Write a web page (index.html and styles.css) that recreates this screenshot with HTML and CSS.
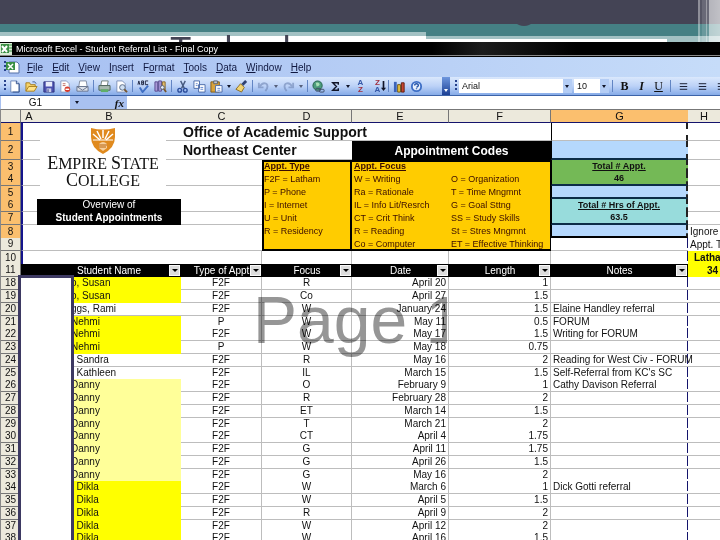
FILE: index.html
```html
<!DOCTYPE html>
<html lang="en">
<head>
  <meta charset="utf-8">
  <title>Student Referral List</title>
  <link rel="stylesheet" href="styles.css">
</head>
<body>
  <header class="slide-head">
    <div class="band"></div>
    <span class="descender"></span>
    <h1>Technology</h1>
    <div class="stripes"></div>
  </header>

  <main class="excel">
    <div class="titlebar">
      <svg width="13" height="12" viewBox="0 0 13 12"><rect x="0" y="0" width="12" height="12" fill="#d9ecd4"/><rect x="1" y="1" width="8" height="9" fill="#3b8f44"/><path d="M2 3l5 6M7 3L2 9" stroke="#fff" stroke-width="2"/><path d="M9 2h3M9 5h3M9 8h3" stroke="#3b8f44"/></svg>
      <span>Microsoft Excel - Student Referral List - Final Copy</span>
    </div>

    <nav class="menubar">
      <i class="grip"></i>
      <svg width="14" height="13" viewBox="0 0 14 13"><path d="M3 1h8l2 2v9H3z" fill="#fff" stroke="#5471a8"/><rect x="0" y="1" width="9" height="8" fill="#3b8f44"/><path d="M2 3l5 5M7 3L2 8" stroke="#fff" stroke-width="1.5"/></svg>
      <button><u>F</u>ile</button>
      <button><u>E</u>dit</button>
      <button><u>V</u>iew</button>
      <button><u>I</u>nsert</button>
      <button>F<u>o</u>rmat</button>
      <button><u>T</u>ools</button>
      <button><u>D</u>ata</button>
      <button><u>W</u>indow</button>
      <button><u>H</u>elp</button>
    </nav>

    <div class="toolbars">
      <div class="toolbar standard">
        <i class="grip"></i>
        <button class="tool" aria-label="New"><svg viewBox="0 0 14 14"><path d="M3 1h6l3 3v9H3z" fill="#fff" stroke="#6b86b8"/><path d="M9 1v3h3M12 4v9H5" fill="none" stroke="#2e4f8c"/></svg></button>
        <button class="tool" aria-label="Open"><svg viewBox="0 0 14 14"><path d="M1 12V3h4l1 2h5v2" fill="#f6d36b" stroke="#a77d1c"/><path d="M1 12l3-5h9l-3 5z" fill="#ffe28a" stroke="#a77d1c"/><path d="M8 2q3-1 4 2" fill="none" stroke="#3d5b94"/></svg></button>
        <button class="tool" aria-label="Save"><svg viewBox="0 0 14 14"><path d="M2 2h11v11H2z" fill="#4a50b0" stroke="#30347e"/><path d="M4 2h7v5H4z" fill="#e7ebfa"/><path d="M5 9h5v4H5z" fill="#c9cde8"/><path d="M6 10h1v3H6z" fill="#30347e"/></svg></button>
        <button class="tool" aria-label="Permission"><svg viewBox="0 0 14 14"><path d="M2 1h6l3 3v9H2z" fill="#fff" stroke="#8a9cc0"/><circle cx="9" cy="10" r="3" fill="#d63b2c"/><path d="M7 10h4" stroke="#fff" stroke-width="1.5"/><path d="M4 4h3M4 6h3" stroke="#c06a60"/></svg></button>
        <button class="tool" aria-label="E-mail"><svg viewBox="0 0 14 14"><path d="M4 1h7l1 6H3z" fill="#fff" stroke="#7f8aa0"/><path d="M1 7h12v5H1z" fill="#dbe0ea" stroke="#68748c"/><path d="M1 7l6 4 6-4" fill="none" stroke="#68748c"/></svg></button>
        <i class="sep"></i>
        <button class="tool" aria-label="Print"><svg viewBox="0 0 14 14"><path d="M4 1h7l-1 5H3z" fill="#fff" stroke="#6e7e78"/><path d="M1 6h12v5H1z" fill="#a8b9b0" stroke="#4d6359"/><path d="M3 10h8v3H3z" fill="#5fae68"/></svg></button>
        <button class="tool" aria-label="Print Preview"><svg viewBox="0 0 14 14"><path d="M2 1h6l3 3v9H2z" fill="#fff" stroke="#7c90b8"/><circle cx="8" cy="8" r="3" fill="#cfe0f3" stroke="#596a85"/><path d="M10 10l3 3" stroke="#76552e" stroke-width="2"/></svg></button>
        <i class="sep"></i>
        <button class="tool" aria-label="Spelling"><svg viewBox="0 0 14 14"><path d="M1 5l1-4 1 4M2 4h1M5 1v4h2V1zM5 3h2M12 1H9v4h3" fill="none" stroke="#1c2440"/><path d="M3 8l3 5 6-7" fill="none" stroke="#3f6fc4" stroke-width="2"/></svg></button>
        <button class="tool" aria-label="Research"><svg viewBox="0 0 14 14"><path d="M1 2h3v10H1zM5 1h3v11H5z" fill="#a898d8" stroke="#584a8c"/><path d="M9 2h3v8H9z" fill="#e6bf6c" stroke="#84652a"/><circle cx="9" cy="8" r="2" fill="#e8eef8" stroke="#4d5c78"/><path d="M11 10l2 3" stroke="#76552e" stroke-width="2"/></svg></button>
        <i class="sep"></i>
        <button class="tool" aria-label="Cut"><svg viewBox="0 0 14 14"><path d="M5 1l4 8M10 1L6 9" stroke="#46597e" stroke-width="1.5"/><circle cx="4" cy="11" r="2" fill="none" stroke="#2d4e9c" stroke-width="1.5"/><circle cx="10" cy="11" r="2" fill="none" stroke="#2d4e9c" stroke-width="1.5"/></svg></button>
        <button class="tool" aria-label="Copy"><svg viewBox="0 0 14 14"><path d="M1 1h6v8H1zM6 5h7v8H6z" fill="#fff" stroke="#4a69a6"/><path d="M3 4h2M3 6h2M8 8h3M8 10h3" stroke="#5d85cf"/></svg></button>
        <button class="tool" aria-label="Paste"><svg viewBox="0 0 14 14"><path d="M1 2h9v11H1z" fill="#d9a33c" stroke="#7f5a14"/><path d="M4 1h4v3H4z" fill="#bfc6d2" stroke="#5a606c"/><path d="M6 6h7v7H6z" fill="#fff" stroke="#4a69a6"/><path d="M8 9h3M8 11h3" stroke="#5d85cf"/></svg></button>
        <i class="drop"></i>
        <button class="tool" aria-label="Format Painter"><svg viewBox="0 0 14 14"><path d="M12 1L8 5" stroke="#2f4170" stroke-width="3"/><path d="M6 4l4 4-3 5-6-3z" fill="#f2d472" stroke="#8a6b20"/></svg></button>
        <i class="sep"></i>
        <button class="tool dim" aria-label="Undo"><svg viewBox="0 0 14 14"><path d="M2 3v5h5" fill="none" stroke="#6f86b4" stroke-width="2"/><path d="M3 7q3-5 7-3 3 3-1 8" fill="none" stroke="#6f86b4" stroke-width="2"/></svg></button>
        <i class="drop dim"></i>
        <button class="tool dim" aria-label="Redo"><svg viewBox="0 0 14 14"><path d="M12 3v5H7" fill="none" stroke="#6f86b4" stroke-width="2"/><path d="M11 7Q8 2 4 4q-3 3 1 8" fill="none" stroke="#6f86b4" stroke-width="2"/></svg></button>
        <i class="drop dim"></i>
        <i class="sep"></i>
        <button class="tool" aria-label="Hyperlink"><svg viewBox="0 0 14 14"><circle cx="6" cy="6" r="5" fill="#4b9c7c" stroke="#246049"/><path d="M4 3q3-1 4 1t-3 3z" fill="#a8dfb4"/><rect x="4" y="9" width="5" height="3" rx="1" fill="none" stroke="#3d4b66"/><rect x="8" y="10" width="5" height="3" rx="1" fill="none" stroke="#3d4b66"/></svg></button>
        <button class="tool" aria-label="AutoSum"><svg viewBox="0 0 14 14"><path d="M10 5V3H4l4 4-4 4h6V9" fill="none" stroke="#101428" stroke-width="1.5"/></svg></button>
        <i class="drop"></i>
        <button class="tool sort" aria-label="Sort Ascending"><span>A</span><span class="red">Z</span></button>
        <button class="tool sort" aria-label="Sort Descending"><span class="red">Z</span><span>A</span><svg class="down" viewBox="0 0 6 14"><path d="M3 1v9" stroke="#101428" stroke-width="2"/><path d="M0 9h6l-3 4z" fill="#101428"/></svg></button>
        <i class="sep"></i>
        <button class="tool" aria-label="Chart Wizard"><svg viewBox="0 0 14 14"><path d="M1 2h3v11H1z" fill="#3b62b8"/><path d="M5 5h3v8H5z" fill="#e9c23e" stroke="#6a5310"/><path d="M9 3h3v10H9z" fill="#c8452e" stroke="#5f1c10"/></svg></button>
        <button class="tool" aria-label="Help"><svg viewBox="0 0 14 14"><circle cx="7" cy="7" r="5" fill="#e9f1fd" stroke="#3e6fc6" stroke-width="2"/><path d="M5 6q0-2 2-2t2 2q0 1-2 2M7 9v1" fill="none" stroke="#2454a8" stroke-width="1.5"/></svg></button>
        <button class="overflow" aria-label="Toolbar Options"><i class="drop light"></i></button>
      </div>
      <div class="toolbar formatting">
        <i class="grip"></i>
        <span class="combo font"><select aria-label="Font"><option>Arial</option></select></span>
        <span class="combo size"><select aria-label="Font Size"><option>10</option></select></span>
        <i class="sep"></i>
        <button class="tool text"><b>B</b></button>
        <button class="tool text italic"><b>I</b></button>
        <button class="tool text"><u>U</u></button>
        <i class="sep"></i>
        <button class="tool lines" aria-label="Align Left"><svg viewBox="0 0 14 14"><path d="M3 4h8M3 7h8M3 10h8" stroke="#101428"/></svg></button>
        <button class="tool lines" aria-label="Center"><svg viewBox="0 0 14 14"><path d="M3 4h8M3 7h8M3 10h8" stroke="#101428"/></svg></button>
        <button class="tool lines" aria-label="Align Right"><svg viewBox="0 0 14 14"><path d="M3 4h8M3 7h8M3 10h8" stroke="#101428"/></svg></button>
      </div>
    </div>

    <div class="formulabar">
      <input class="namebox" aria-label="Name Box" value="G1">
      <span class="fx"><i class="drop"></i><em>fx</em></span>
      <input class="formula" aria-label="Formula">
    </div>

    <div class="sheet">
      <table>
        <colgroup>
          <col class="c-num"><col class="c-a"><col class="c-b"><col class="c-c"><col class="c-d"><col class="c-e"><col class="c-f"><col class="c-g"><col>
        </colgroup>
        <thead>
          <tr><th></th><th>A</th><th>B</th><th>C</th><th class="line">D</th><th class="line">E</th><th class="line">F</th><th class="on">G</th><th>H</th></tr>
        </thead>
        <tbody class="top">
          <tr class="r1"><th class="on">1</th><td class="edge"></td><td></td><td colspan="4" class="title">Office of Academic Support</td><td class="sel first"></td><td></td></tr>
          <tr class="r2"><th class="on">2</th><td class="edge"></td><td></td><td colspan="2" class="title">Northeast Center</td><td colspan="2" class="codes">Appointment Codes</td><td class="sel blue"></td><td></td></tr>
          <tr class="flat"><th class="on">3</th><td class="edge"></td><td></td><td></td>
            <td rowspan="7" class="key"><b><u>Appt. Type</u></b><br>F2F = Latham<br>P = Phone<br>I = Internet<br>U = Unit<br>R = Residency</td>
            <td rowspan="7" class="key open"><b><u>Appt. Focus</u></b><br>W = Writing<br>Ra = Rationale<br>IL = Info Lit/Resrch<br>CT = Crit Think<br>R = Reading<br>Co = Computer</td>
            <td rowspan="7" class="key end"><br>O = Organization<br>T = Time Mngmnt<br>G = Goal Sttng<br>SS = Study Skills<br>St = Stres Mngmnt<br>ET = Effective Thinking</td>
            <td class="sel green"><b><u>Total # Appt.</u></b></td><td></td></tr>
          <tr><th class="on">4</th><td class="edge"></td><td></td><td></td><td class="sel green under"><b>46</b></td><td></td></tr>
          <tr class="flat"><th class="on">5</th><td class="edge"></td><td></td><td></td><td class="sel blue under"></td><td></td></tr>
          <tr><th class="on">6</th><td class="edge"></td><td class="label">Overview of</td><td></td><td class="sel aqua"><b><u>Total # Hrs of Appt.</u></b></td><td></td></tr>
          <tr><th class="on">7</th><td class="edge"></td><td class="label"><b>Student Appointments</b></td><td></td><td class="sel aqua under"><b>63.5</b></td><td></td></tr>
          <tr class="flat"><th class="on">8</th><td class="edge"></td><td></td><td></td><td class="sel blue last"></td><td class="aside">Ignore this</td></tr>
          <tr><th>9</th><td class="edge"></td><td></td><td></td><td class="dash"></td><td class="aside">Appt. Total</td></tr>
          <tr class="flat"><th>10</th><td class="edge"></td><td></td><td class="line"></td><td class="line"></td><td class="line"></td><td class="line"></td><td class="dash"></td><td class="tally">Latham</td></tr>
          <tr class="filters"><th>11</th><td></td><td><div>Student Name<button aria-label="Filter Student Name"></button></div></td><td><div>Type of Appt<button aria-label="Filter Type"></button></div></td><td><div>Focus<button aria-label="Filter Focus"></button></div></td><td><div>Date<button aria-label="Filter Date"></button></div></td><td><div>Length<button aria-label="Filter Length"></button></div></td><td><div>Notes<button aria-label="Filter Notes"></button></div></td><td class="tally count">34</td></tr>
        </tbody>
        <tbody id="rows"></tbody>
      </table>

      <figure class="logo">
        <svg width="26" height="28" viewBox="0 0 26 28"><path d="M1 1q12 3 24 0v9q0 11-12 17Q1 21 1 10z" fill="#e08a1e"/><path d="M13 3v8M7 4l4 8M19 4l-4 8M3 7l7 6M23 7l-7 6" stroke="#fff" stroke-width="1.5"/><path d="M3 13h20" stroke="#fff"/><path d="M9 17q4-4 8 0v4l-4 3-4-3z" fill="#f6cf9b"/><path d="M9 18h8M9 20h7" stroke="#b9640c"/></svg>
        <figcaption><big>E</big>MPIRE <big>S</big>TATE<br><big>C</big>OLLEGE</figcaption>
      </figure>
      <div class="mask"></div>
      <div class="watermark">Page 1</div>
    </div>
  </main>

  <script>
    // number, name, shade, type, focus, date, length, notes
    const data = [
      [18, "o, Susan", "yellow", "F2F", "R", "April 20", "1", ""],
      [19, "o, Susan", "yellow", "F2F", "Co", "April 27", "1.5", ""],
      [20, "ggs, Rami", "", "F2F", "W", "January 24", "1.5", "Elaine Handley referral"],
      [21, "Nehmi", "yellow", "P", "W", "May 11", "0.5", "FORUM"],
      [22, "Nehmi", "yellow", "F2F", "W", "May 17", "1.5", "Writing for FORUM"],
      [23, "Nehmi", "yellow", "P", "W", "May 18", "0.75", ""],
      [24, "\u00a0 Sandra", "", "F2F", "R", "May 16", "2", "Reading for West Civ - FORUM"],
      [25, "\u00a0 Kathleen", "", "F2F", "IL", "March 15", "1.5", "Self-Referral from KC's SC"],
      [26, "Danny", "pale", "F2F", "O", "February 9", "1", "Cathy Davison Referral"],
      [27, "Danny", "pale", "F2F", "R", "February 28", "2", ""],
      [28, "Danny", "pale", "F2F", "ET", "March 14", "1.5", ""],
      [29, "Danny", "pale", "F2F", "T", "March 21", "2", ""],
      [30, "Danny", "pale", "F2F", "CT", "April 4", "1.75", ""],
      [31, "Danny", "pale", "F2F", "G", "April 11", "1.75", ""],
      [32, "Danny", "pale", "F2F", "G", "April 26", "1.5", ""],
      [33, "Danny", "pale", "F2F", "G", "May 16", "2", ""],
      [34, "\u00a0 Dikla", "yellow", "F2F", "W", "March 6", "1", "Dick Gotti referral"],
      [35, "\u00a0 Dikla", "yellow", "F2F", "W", "April 5", "1.5", ""],
      [36, "\u00a0 Dikla", "yellow", "F2F", "R", "April 9", "2", ""],
      [37, "\u00a0 Dikla", "yellow", "F2F", "W", "April 12", "2", ""],
      [38, "\u00a0 Dikla", "yellow", "F2F", "W", "April 16", "1.5", ""]
    ];
    document.getElementById("rows").innerHTML = data.map(r => `<tr>
      <th>${r[0]}</th><td class="${r[2]}"></td><td class="name ${r[2]}">${r[1]}</td>
      <td class="mid line">${r[3]}</td><td class="mid line">${r[4]}</td>
      <td class="num line">${r[5]}</td><td class="num line">${r[6]}</td>
      <td class="dash">${r[7]}</td><td></td></tr>`).join("");
  </script>
</body>
</html>
```

FILE: styles.css
```css
* { box-sizing: border-box; }
body { margin: 0; height: 100vh; overflow: hidden; background: #fff; font-family: "Liberation Sans", Arial, sans-serif; font-size: 10px; color: #111; }
button { padding: 0; border: 0; background: none; font: inherit; color: inherit; }
input, select { border: 0; border-radius: 0; padding: 0; margin: 0; font: inherit; color: inherit; background: #fff; }

/* slide header */
.slide-head { position: relative; height: 42px; overflow: hidden; background: linear-gradient(#444455 24px, #458084 24px, #458084 32px, #a2c1c3 32px, #a2c1c3 36px, #fff 36px); }
.band { position: absolute; left: 426px; right: 0; top: 24px; height: 18px; background: linear-gradient(#458084 12px, #a2c1c3 12px, #a2c1c3 15px, #fff 15px); }
.band::after { content: ""; position: absolute; right: 0; top: 12px; width: 53px; height: 6px; background: #a2c1c3; }
.descender { position: absolute; left: 517px; top: 20px; width: 14px; height: 6px; border-radius: 50%; background: #444455; }
.slide-head h1 { position: absolute; left: 170px; top: 29px; margin: 0; font-size: 35px; font-weight: normal; line-height: 40px; color: #444455; }
.stripes { position: absolute; right: 0; top: 0; width: 22px; height: 42px; background: linear-gradient(90deg, #ffffff66 2px, #ffffff18 2px, #ffffff18 4px, #ffffff33 4px, #ffffff33 8px, #ffffff77 8px, #ffffff77 9px, #ffffff33 9px, #ffffff33 11px, #ffffff99 11px, #ffffffaa 100%); }

/* window */
.excel { display: flex; flex-direction: column; height: calc(100vh - 42px); }
.excel > * { flex: none; }
.titlebar { display: flex; align-items: center; gap: 3px; height: 14px; background: linear-gradient(90deg, #000 60%, #1c1c1c 67%, #000 80%); border-bottom: 1px solid #888; color: #fff; font-size: 9px; }
.menubar { display: flex; align-items: center; height: 21px; padding-left: 4px; border-top: 1px solid #000; background: linear-gradient(90deg, #a6bff1, #c6dcf9); color: #101840; }
.menubar svg { margin: 0 7px 0 0; }
.menubar button { margin-right: 9px; }
.grip { width: 2px; height: 12px; background: repeating-linear-gradient(#27418c 0 2px, transparent 2px 4px); flex: none; }
.toolbars { display: flex; height: 19px; border-bottom: 1px solid #3c63a8; }
.toolbar { display: flex; align-items: center; background: linear-gradient(#dbe8fc, #bcd2f7 50%, #86abe8); }
.standard { flex: 0 0 450px; padding-left: 4px; }
.formatting { flex: 1; padding-left: 5px; overflow: hidden; }
.tool { flex: none; display: flex; align-items: center; justify-content: center; width: 17px; height: 18px; }
.tool svg { width: 13px; height: 13px; }
.dim { opacity: .6; }
.sep { flex: none; width: 1px; height: 12px; margin: 0 2px; background: #6285c4; }
.drop { flex: none; width: 8px; display: flex; justify-content: center; }
.drop::after { content: ""; border: 2px solid transparent; border-top: 3px solid #101428; border-bottom: 0; }
.drop.light::after { border-top-color: #fff; }
.sort { position: relative; flex-direction: column; font-size: 8px; line-height: 7px; font-weight: bold; color: #3558a8; }
.sort .red { color: #a03040; }
.sort .down { position: absolute; right: 0; top: 3px; width: 5px; height: 12px; }
.overflow { display: flex; align-items: flex-end; justify-content: center; width: 8px; height: 18px; margin-left: auto; padding-bottom: 3px; background: linear-gradient(#6f97de, #1b3f94); }
.combo { position: relative; flex: none; margin-left: 2px; }
.combo select { appearance: none; width: 100%; height: 14px; padding-left: 3px; display: block; font-size: 9px; }
.combo::after { content: ""; position: absolute; right: 3px; top: 6px; border: 2px solid transparent; border-top: 3px solid #101428; border-bottom: 0; }
.combo::before { content: ""; position: absolute; right: 0; top: 0; width: 9px; height: 14px; background: #b4cdf5; }
.font { width: 113px; }
.size { width: 35px; }
.formatting .sep { margin: 0 3px; }
.text { font-family: "Liberation Serif", serif; font-size: 12px; }
.italic { font-style: italic; }
.lines { width: 19px; }

.formulabar { display: flex; height: 13px; background: #a9c1f0; padding-left: 1px; }
.namebox { width: 69px; text-align: center; }
.fx { display: flex; align-items: center; justify-content: space-between; width: 57px; padding: 0 3px; }
.fx em { font-family: "Liberation Serif", serif; font-weight: bold; font-size: 11px; }
.formula { flex: 1; min-width: 0; }

/* sheet */
.excel .sheet { position: relative; flex: 1; min-height: 0; overflow: hidden; border-left: 1px solid #888; }
table { width: 100%; table-layout: fixed; border-collapse: separate; border-spacing: 0; line-height: 12px; }
.c-num { width: 20px; } .c-a { width: 16px; } .c-b { width: 144px; } .c-c { width: 81px; }
.c-d { width: 90px; } .c-e { width: 97px; } .c-f { width: 102px; } .c-g { width: 137px; }
th, td { height: 13px; padding: 0 2px; white-space: nowrap; overflow: hidden; text-align: left; vertical-align: middle; border-bottom: 1px solid #bdbdbd; }
th { padding: 0; font-weight: normal; text-align: center; background: #ece9dc; border-bottom-color: #777; }
tbody th { border-right: 1px solid #777; }
thead th { height: 14px; border-top: 1px solid #777; border-bottom: 1px solid #14146c; font-size: 11px; }
thead th:first-child { border-right: 1px solid #777; }
th.on { background: #fbbf6e; }
.line { border-right: 1px solid #bdbdbd; }
thead .line { border-right-color: #777; }
.r1 > * { height: 18px; }
.r2 > * { height: 19px; }
.flat > *, #rows tr:nth-child(4n) > * { border-bottom: 0; }
#rows tr:nth-child(4n) > * { height: 12px; }
.edge { border-left: 2px solid #14148c; }
.title { font-size: 14px; font-weight: bold; line-height: 16px; }
.codes { background: #000; color: #fff; font-size: 12px; font-weight: bold; line-height: 16px; text-align: center; border: 0; }
.top .key { background: #fc0; border: 0; box-shadow: inset 0 0 0 2px #000; vertical-align: top; padding: 0 2px; font-size: 9px; line-height: 13px; color: #3a0d00; }
.top .key.open { box-shadow: inset 0 2px #000, inset 0 -2px #000; }
.top .key.end { box-shadow: inset 0 2px #000, inset 0 -2px #000, inset -1px 0 #000; }
.label { background: #000; color: #fff; text-align: center; border-bottom-color: #000; }
.sel { text-align: center; border-left: 1px solid #000; border-right: 2px dashed #222; font-size: 9px; line-height: 11px; }
.blue { background: #b5d8fd; }
.green { background: #74b956; border-bottom: 0; }
.aqua { background: #98dcdc; border-bottom: 0; }
.r2 .sel, .top .under { border-bottom: 2px solid #0c2d48; }
.top .last { border-bottom: 2px solid #000; }
.dash { overflow: visible; padding-right: 0; background: linear-gradient(#14146c 10px, transparent 10px) right top / 1px 13px no-repeat; }
.aside { border-bottom: 0; }
.tally { background: #ff0; font-weight: bold; padding-left: 6px; border-bottom: 0; }
.filters td { background: #000; color: #fff; border-bottom: 0; padding: 0; }
.filters td.count { background: #ff0; color: #111; text-align: right; padding-right: 2px; }
.filters div { position: relative; text-align: center; line-height: 13px; }
.filters button { position: absolute; right: 1px; top: 1px; width: 11px; height: 11px; background: #dcdcdc; border: 1px solid #f8f8f8; display: flex; align-items: center; justify-content: center; }
.filters button::after { content: ""; border: 3px solid transparent; border-top-color: #000; border-bottom: 0; }
.name { padding-left: 34px; }
.yellow { background: #ff0; border-bottom-color: #ff0; }
.pale { background: #ffff99; border-bottom-color: #ffff99; }
.mid { text-align: center; }
.num { text-align: right; }

/* things floating over the grid */
.logo { position: absolute; left: 39px; top: 15px; width: 126px; height: 64px; margin: 0; padding-top: 3px; background: #fff; text-align: center; }
.logo svg { display: block; margin: 0 auto; }
.logo figcaption { font-family: "Liberation Serif", serif; font-size: 16px; line-height: 17px; white-space: nowrap; }
.logo big { font-size: 18px; line-height: 16px; }
.mask { position: absolute; left: 17px; top: 166px; bottom: 0; width: 56px; background: #fff; border: 3px solid #3d3962; border-bottom: 0; }
.watermark { position: absolute; left: 252px; top: 173px; width: 194px; overflow: hidden; white-space: nowrap; font-size: 66px; line-height: 76px; color: #969696; mix-blend-mode: multiply; }
```
